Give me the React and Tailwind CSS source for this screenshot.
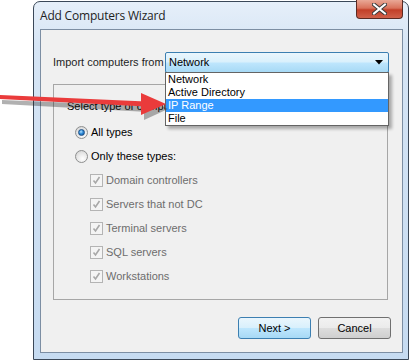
import React from "react";

const types = [
  "Domain controllers",
  "Servers that not DC",
  "Terminal servers",
  "SQL servers",
  "Workstations",
];

const options = ["Network", "Active Directory", "IP Range", "File"];

function Radio({ checked }) {
  return (
    <span className="relative flex h-[13px] w-[13px] shrink-0 items-center justify-center rounded-full border border-[#8e8f8f] bg-[radial-gradient(circle_at_60%_70%,#ffffff_0%,#e6e6e6_55%,#c9c9c9_100%)]">
      {checked && (
        <span className="h-[7px] w-[7px] rounded-full border border-[#1c4f86] bg-[radial-gradient(circle_at_40%_35%,#b6e3ff_0%,#2f8bd8_45%,#0d4d93_100%)]" />
      )}
    </span>
  );
}

function DisabledCheck() {
  return (
    <span className="flex h-[13px] w-[13px] shrink-0 items-center justify-center border border-[#b4b4b4] bg-[#f4f4f4]">
      <svg width="9" height="9" viewBox="0 0 9 9">
        <path d="M1.5 4.5 L3.5 7 L7.5 1" fill="none" stroke="#a8a8a8" strokeWidth="1.6" />
      </svg>
    </span>
  );
}

function CloseButton() {
  return (
    <div className="-mt-[2px] flex h-[19px] w-[47px] items-center justify-center rounded-b-[4px] border border-t-0 border-[#5b2a22] bg-[linear-gradient(180deg,#e9a896_0%,#d9725b_45%,#c23f28_55%,#d0614a_100%)]">
      <svg width="15" height="12" viewBox="0 0 15 12">
        <path d="M2 1.5 L13 10.5 M13 1.5 L2 10.5" stroke="#3a3a3a" strokeWidth="4" strokeLinecap="square" />
        <path d="M2 1.5 L13 10.5 M13 1.5 L2 10.5" stroke="#ffffff" strokeWidth="2" strokeLinecap="square" />
      </svg>
    </div>
  );
}

function Arrow() {
  return (
    <svg className="pointer-events-none absolute left-0 top-0 z-20" width="410" height="361">
      <g opacity="0.35" transform="translate(2,4)">
        <path d="M0 96 L146 102 L146 108 L0 100 Z" fill="#222" />
        <path d="M142 94 L166 105 L142 116 Z" fill="#222" />
      </g>
      <path d="M0 95 L146 101.5 L146 106.5 L0 99 Z" fill="#ea3b3b" />
      <path d="M141 93 L166 104 L141 115 Z" fill="#ea3b3b" />
    </svg>
  );
}

export default function App() {
  return (
    <div className="relative h-[361px] w-[410px] overflow-hidden bg-white font-['Liberation_Sans',sans-serif] text-[11px] text-black">
      <div className="ml-[33px] mt-px flex h-[359px] w-[376px] flex-col rounded-t-[7px] border border-[#3b4858] bg-[linear-gradient(180deg,#e6eff9_0%,#d6e5f5_12%,#c6dbf1_100%)]">
        <div className="flex h-[27px] shrink-0 items-start">
          <div className="flex h-[27px] items-center pl-[6px] font-['Open_Sans',sans-serif] text-[12px] tracking-[-0.2px] text-[#1e1e1e]">
            Add Computers Wizard
          </div>
          <div className="ml-auto mr-[5px]">
            <CloseButton />
          </div>
        </div>

        <div className="ml-[6px] mr-[5px] h-[324px] shrink-0 border border-[#7c8ea3] bg-[#f0f0f0]">
          <div className="flex items-center pl-[12px] pr-[13px] pt-[22px]">
            <span className="whitespace-nowrap text-[11px] text-[#1e1e1e]">
              Import computers from
            </span>
            <div className="relative ml-auto w-[224px] shrink-0">
              <div className="flex h-[21px] items-center rounded-[2px] border border-[#3c7fb1] bg-[linear-gradient(180deg,#eaf6fd_0%,#d9f0fc_48%,#bee6fd_52%,#a7d9f5_100%)] pl-[3px] pr-[5px]">
                <span>Network</span>
                <svg className="ml-auto" width="8" height="5" viewBox="0 0 8 5">
                  <path d="M0 0 L8 0 L4 4.5 Z" fill="#000" />
                </svg>
              </div>
              <div className="absolute left-0 top-[20px] z-10 w-[224px] border border-[#646464] bg-white shadow-[3px_3px_3px_rgba(0,0,0,0.3)]">
                {options.map((o) => (
                  <div
                    key={o}
                    className={
                      o === "IP Range"
                        ? "h-[13px] bg-[#3399ff] pl-[2px] leading-[13px] text-white"
                        : "h-[13px] pl-[2px] leading-[13px]"
                    }
                  >
                    {o}
                  </div>
                ))}
              </div>
            </div>
          </div>

          <div className="ml-[12px] mt-[11px] h-[216px] w-[335px] border border-[#a6a6a6]">
            <div className="ml-[13px] mt-[15px] h-[13px] w-[98px] overflow-hidden whitespace-nowrap leading-[13px]">
              Select type of computers:
            </div>
            <div className="mt-[7px] flex flex-col pl-[21px]">
              <div className="flex h-[24px] items-center gap-[3px]">
                <Radio checked />
                <span>All types</span>
              </div>
              <div className="flex h-[24px] items-center gap-[3px]">
                <Radio />
                <span>Only these types:</span>
              </div>
              {types.map((t) => (
                <div key={t} className="ml-[15px] flex h-[24px] items-center gap-[3px] text-[#6d6d6d]">
                  <DisabledCheck />
                  <span>{t}</span>
                </div>
              ))}
            </div>
          </div>

          <div className="mt-[17px] flex justify-end gap-[7px] pr-[11px]">
            <button className="flex h-[22px] w-[73px] items-center justify-center rounded-[3px] border border-[#3c7fb1] bg-[linear-gradient(180deg,#eaf6fd_0%,#d9f0fc_48%,#bee6fd_52%,#a7d9f5_100%)]">
              Next &gt;
            </button>
            <button className="flex h-[22px] w-[73px] items-center justify-center rounded-[3px] border border-[#707070] bg-[linear-gradient(180deg,#f2f2f2_0%,#ebebeb_48%,#dddddd_52%,#cfcfcf_100%)]">
              Cancel
            </button>
          </div>
        </div>
      </div>
      <Arrow />
    </div>
  );
}
